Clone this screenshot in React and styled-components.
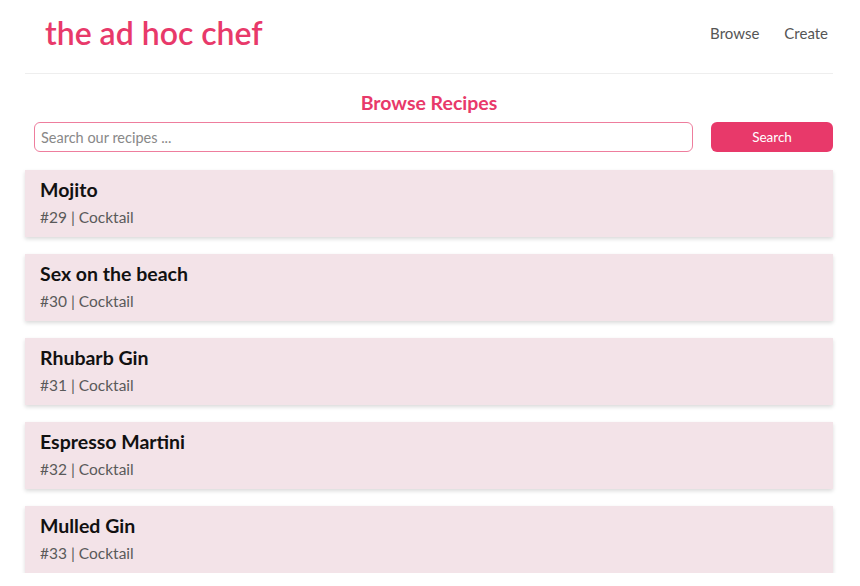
import React from 'react';
import styled, { createGlobalStyle } from 'styled-components';

const GlobalStyle = createGlobalStyle`
  body {
    margin: 0;
    background: white;
    font-family: Lato, "Noto Sans", sans-serif;
  }
`;

const Page = styled.div`
  width: 808px;
  margin-left: 25px;
`;

const Header = styled.header`
  height: 73px;
  display: flex;
  align-items: center;
  justify-content: space-between;
  padding: 0 5px 0 20px;
  border-bottom: 1px solid #eeeeee;
`;

const Logo = styled.div`
  font-size: 32px;
  font-weight: 600;
  color: #e8396a;
  padding-bottom: 9px;
`;

const Nav = styled.nav`
  display: flex;
  gap: 25px;
  padding-bottom: 8px;
`;

const NavLink = styled.a`
  font-size: 15px;
  color: #555;
  text-decoration: none;
`;

const Title = styled.h1`
  margin: 18px 0 8px;
  text-align: center;
  font-size: 19.5px;
  font-weight: 700;
  color: #e8396a;
  line-height: 22px;
`;

const SearchRow = styled.form`
  display: flex;
  gap: 18px;
  padding-left: 9px;
  margin-bottom: 18px;
`;

const SearchInput = styled.input`
  flex: 1;
  height: 30px;
  box-sizing: border-box;
  border: 1px solid #ee7d9d;
  border-radius: 6px;
  padding: 0 6px;
  font-family: inherit;
  font-size: 14.5px;
  color: #333;
  outline: none;

  &::placeholder {
    color: #888;
  }
`;

const SearchButton = styled.button`
  width: 122px;
  height: 30px;
  border: none;
  border-radius: 6px;
  background: #e8396a;
  color: white;
  font-family: inherit;
  font-size: 13.5px;
`;

const List = styled.div`
  display: flex;
  flex-direction: column;
  gap: 17px;
`;

const Card = styled.div`
  height: 67px;
  box-sizing: border-box;
  padding: 8px 15px;
  background: #f3e3e8;
  box-shadow: 0 2px 4px rgba(0, 0, 0, 0.15);
`;

const Name = styled.div`
  font-size: 19.5px;
  font-weight: 700;
  color: #111;
  line-height: 24px;
`;

const Meta = styled.div`
  margin-top: 5px;
  font-size: 15.5px;
  color: #5a5a5a;
  line-height: 20px;
`;

const recipes = [
  { id: 29, name: 'Mojito', type: 'Cocktail' },
  { id: 30, name: 'Sex on the beach', type: 'Cocktail' },
  { id: 31, name: 'Rhubarb Gin', type: 'Cocktail' },
  { id: 32, name: 'Espresso Martini', type: 'Cocktail' },
  { id: 33, name: 'Mulled Gin', type: 'Cocktail' }
];

export default function App() {
  return (
    <Page>
      <GlobalStyle />
      <Header>
        <Logo>the ad hoc chef</Logo>
        <Nav>
          <NavLink href="#">Browse</NavLink>
          <NavLink href="#">Create</NavLink>
        </Nav>
      </Header>
      <Title>Browse Recipes</Title>
      <SearchRow onSubmit={e => e.preventDefault()}>
        <SearchInput placeholder="Search our recipes ..." />
        <SearchButton type="submit">Search</SearchButton>
      </SearchRow>
      <List>
        {recipes.map(r => (
          <Card key={r.id}>
            <Name>{r.name}</Name>
            <Meta>
              #{r.id} | {r.type}
            </Meta>
          </Card>
        ))}
      </List>
    </Page>
  );
}
